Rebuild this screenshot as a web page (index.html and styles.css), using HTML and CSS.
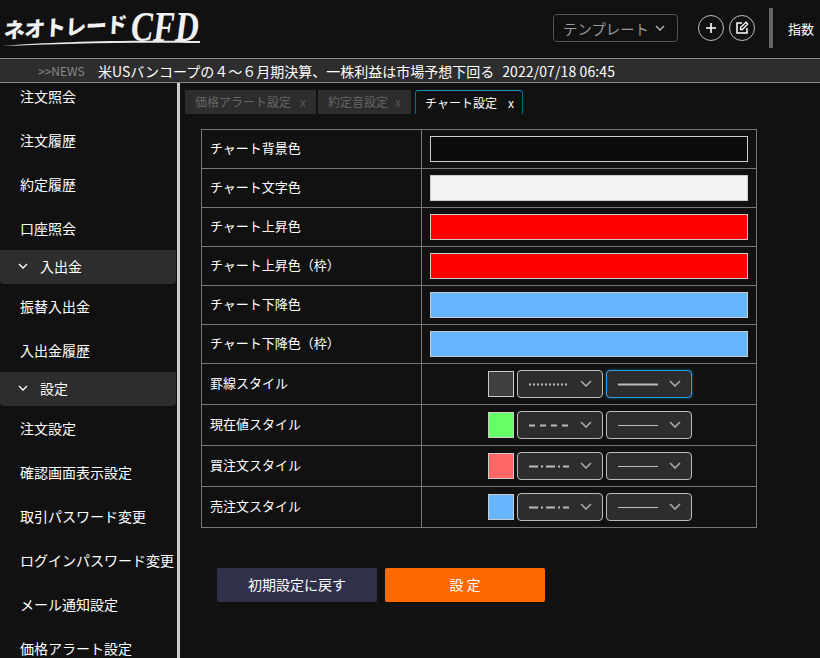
FILE: index.html
```html
<!DOCTYPE html>
<html lang="ja">
<head>
  <meta charset="UTF-8">
  <title>ネオトレードCFD</title>
  <link rel="stylesheet" href="styles.css">
</head>
<body>
  <!-- Header -->
  <header class="header">
    <div class="logo">
      <span class="logo-kana">ネオトレード</span><span class="logo-cfd">CFD</span>
      <svg class="logo-swoosh" width="200" height="10" viewBox="0 0 200 10"><path d="M1 9 C50 5 110 3 199 4 L199 6 C120 5 60 7 1 9 Z" fill="#e8e8e8"/></svg>
    </div>
    <div class="header-tools">
      <div class="template-btn">テンプレート
        <svg width="10" height="6" viewBox="0 0 10 6"><path d="M1 1l4 4 4-4" fill="none" stroke="#aaa" stroke-width="1.6"/></svg>
      </div>
      <div class="round-btn">
        <svg width="12" height="12" viewBox="0 0 12 12"><path d="M6 1v10M1 6h10" stroke="#fff" stroke-width="1.6"/></svg>
      </div>
      <div class="round-btn">
        <svg width="14" height="14" viewBox="0 0 14 14"><path d="M7 2H2v10h10V7" fill="none" stroke="#fff" stroke-width="1.5"/><path d="M5.5 8.5V6.6L11 1.2l1.8 1.8-5.4 5.5z" fill="none" stroke="#fff" stroke-width="1.3"/></svg>
      </div>
      <div class="header-sep"></div>
      <div class="header-index">指数</div>
    </div>
  </header>

  <!-- News -->
  <div class="news">
    <span class="news-label">&gt;&gt;NEWS</span>
    <span class="news-text">米USバンコープの４～６月期決算、一株利益は市場予想下回る</span>
    <span class="news-date">2022/07/18 06:45</span>
  </div>

  <div class="wrapper">
    <!-- Sidebar -->
    <nav class="sidebar">
      <div class="side-list">
        <a class="side-item">注文照会</a>
        <a class="side-item">注文履歴</a>
        <a class="side-item">約定履歴</a>
        <a class="side-item">口座照会</a>
        <div class="side-group">
          <svg width="10" height="6" viewBox="0 0 10 6"><path d="M1 1l4 4 4-4" fill="none" stroke="#fff" stroke-width="1.3"/></svg>
          入出金
        </div>
        <a class="side-item">振替入出金</a>
        <a class="side-item">入出金履歴</a>
        <div class="side-group">
          <svg width="10" height="6" viewBox="0 0 10 6"><path d="M1 1l4 4 4-4" fill="none" stroke="#fff" stroke-width="1.3"/></svg>
          設定
        </div>
        <a class="side-item">注文設定</a>
        <a class="side-item">確認画面表示設定</a>
        <a class="side-item">取引パスワード変更</a>
        <a class="side-item">ログインパスワード変更</a>
        <a class="side-item">メール通知設定</a>
        <a class="side-item">価格アラート設定</a>
      </div>
    </nav>

    <!-- Main -->
    <main class="main">
      <div class="tabs">
        <div class="tab tab-1">価格アラート設定<span class="tab-x">x</span></div>
        <div class="tab tab-2">約定音設定<span class="tab-x">x</span></div>
        <div class="tab tab-active">チャート設定<span class="tab-x">x</span></div>
      </div>

      <table class="settings">
        <tr class="color-row"><th>チャート背景色</th><td><div class="color-bar c-black"></div></td></tr>
        <tr class="color-row"><th>チャート文字色</th><td><div class="color-bar c-white"></div></td></tr>
        <tr class="color-row"><th>チャート上昇色</th><td><div class="color-bar c-red"></div></td></tr>
        <tr class="color-row"><th>チャート上昇色（枠）</th><td><div class="color-bar c-red"></div></td></tr>
        <tr class="color-row"><th>チャート下降色</th><td><div class="color-bar c-blue"></div></td></tr>
        <tr class="color-row"><th>チャート下降色（枠）</th><td><div class="color-bar c-blue"></div></td></tr>
        <tr class="style-row">
          <th>罫線スタイル</th>
          <td><div class="style-cell">
            <div class="swatch s-gray"></div>
            <div class="line-select"><svg width="40" height="3"><line x1="0" x2="40" y1="1.5" y2="1.5" stroke="#bbb" stroke-width="2" stroke-dasharray="2 2"/></svg><svg class="caret" width="12" height="7" viewBox="0 0 12 7"><path d="M1 1l5 5 5-5" fill="none" stroke="#aaa" stroke-width="1.6"/></svg></div>
            <div class="line-select focused"><svg width="40" height="3"><line x1="0" x2="40" y1="1.5" y2="1.5" stroke="#bbb" stroke-width="2"/></svg><svg class="caret" width="12" height="7" viewBox="0 0 12 7"><path d="M1 1l5 5 5-5" fill="none" stroke="#aaa" stroke-width="1.6"/></svg></div>
          </div></td>
        </tr>
        <tr class="style-row">
          <th>現在値スタイル</th>
          <td><div class="style-cell">
            <div class="swatch s-green"></div>
            <div class="line-select"><svg width="40" height="3"><line x1="0" x2="40" y1="1.5" y2="1.5" stroke="#bbb" stroke-width="2" stroke-dasharray="6 5"/></svg><svg class="caret" width="12" height="7" viewBox="0 0 12 7"><path d="M1 1l5 5 5-5" fill="none" stroke="#aaa" stroke-width="1.6"/></svg></div>
            <div class="line-select"><svg width="40" height="3"><line x1="0" x2="40" y1="1.5" y2="1.5" stroke="#bbb" stroke-width="1"/></svg><svg class="caret" width="12" height="7" viewBox="0 0 12 7"><path d="M1 1l5 5 5-5" fill="none" stroke="#aaa" stroke-width="1.6"/></svg></div>
          </div></td>
        </tr>
        <tr class="style-row">
          <th>買注文スタイル</th>
          <td><div class="style-cell">
            <div class="swatch s-red"></div>
            <div class="line-select"><svg width="40" height="3"><line x1="0" x2="40" y1="1.5" y2="1.5" stroke="#bbb" stroke-width="2" stroke-dasharray="9 3 2 3"/></svg><svg class="caret" width="12" height="7" viewBox="0 0 12 7"><path d="M1 1l5 5 5-5" fill="none" stroke="#aaa" stroke-width="1.6"/></svg></div>
            <div class="line-select"><svg width="40" height="3"><line x1="0" x2="40" y1="1.5" y2="1.5" stroke="#bbb" stroke-width="1"/></svg><svg class="caret" width="12" height="7" viewBox="0 0 12 7"><path d="M1 1l5 5 5-5" fill="none" stroke="#aaa" stroke-width="1.6"/></svg></div>
          </div></td>
        </tr>
        <tr class="style-row">
          <th>売注文スタイル</th>
          <td><div class="style-cell">
            <div class="swatch s-blue"></div>
            <div class="line-select"><svg width="40" height="3"><line x1="0" x2="40" y1="1.5" y2="1.5" stroke="#bbb" stroke-width="2" stroke-dasharray="9 3 2 3"/></svg><svg class="caret" width="12" height="7" viewBox="0 0 12 7"><path d="M1 1l5 5 5-5" fill="none" stroke="#aaa" stroke-width="1.6"/></svg></div>
            <div class="line-select"><svg width="40" height="3"><line x1="0" x2="40" y1="1.5" y2="1.5" stroke="#bbb" stroke-width="1"/></svg><svg class="caret" width="12" height="7" viewBox="0 0 12 7"><path d="M1 1l5 5 5-5" fill="none" stroke="#aaa" stroke-width="1.6"/></svg></div>
          </div></td>
        </tr>
      </table>

      <div class="actions">
        <button class="btn btn-reset">初期設定に戻す</button>
        <button class="btn btn-save">設 定</button>
      </div>
    </main>
  </div>
</body>
</html>
```

FILE: styles.css
```css
/* Global Styles */
* {
  margin: 0;
  padding: 0;
  box-sizing: border-box;
}

html, body {
  height: 658px;
  overflow: hidden;
}

body {
  font-family: "Noto Sans CJK JP", "Noto Sans", sans-serif;
  background-color: #111;
  color: #fff;
  font-size: 14px;
}

/* Header */
.header {
  height: 58px;
  display: flex;
  justify-content: space-between;
  align-items: center;
  overflow: hidden;
}

.logo {
  position: relative;
  display: flex;
  align-items: center;
  height: 58px;
  padding-left: 4px;
  color: #f2f2f2;
  white-space: nowrap;
}

.logo-kana {
  font-size: 21px;
  font-weight: 900;
  letter-spacing: -0.5px;
  transform: rotate(-3deg) skewX(-6deg);
  margin-bottom: 6px;
}

.logo-cfd {
  font-family: "Liberation Serif", serif;
  font-size: 33px;
  font-weight: bold;
  font-style: italic;
  transform: scaleY(1.25);
  margin-left: 4px;
  margin-bottom: 4px;
}

.logo-swoosh {
  position: absolute;
  left: 1px;
  top: 37px;
}

.header-tools {
  display: flex;
  align-items: center;
  padding-bottom: 2px;
}

.template-btn {
  width: 125px;
  height: 28px;
  margin-right: 20px;
  padding-right: 3px;
  display: flex;
  align-items: center;
  justify-content: center;
  gap: 6px;
  border: 1px solid #555;
  border-radius: 4px;
  color: #999;
  font-size: 14.4px;
}

.round-btn {
  width: 26px;
  height: 26px;
  margin-right: 5px;
  display: flex;
  align-items: center;
  justify-content: center;
  border: 1px solid #bbb;
  border-radius: 50%;
}

.header-sep {
  width: 4px;
  height: 40px;
  margin: 0 15px 0 9px;
  background-color: #666;
}

.header-index {
  width: 32px;
  font-size: 13px;
}

/* News */
.news {
  height: 25px;
  display: flex;
  align-items: center;
  padding-left: 38px;
  background-color: #2d2d2d;
  border-top: 1px solid #888;
  border-bottom: 1px solid #888;
  white-space: nowrap;
}

.news-label {
  width: 60px;
  color: #888;
  font-size: 12px;
}

.news-text {
  margin-right: 8px;
}

.news-date {
  letter-spacing: 0.1px;
}

/* Sidebar */
.wrapper {
  display: flex;
  height: 575px;
}

.sidebar {
  width: 180px;
  flex-shrink: 0;
  overflow: hidden;
  border-right: 3px solid #ccc;
}

.side-list {
  margin-top: -9px;
}

.side-item {
  display: flex;
  align-items: center;
  height: 44px;
  padding-left: 20px;
  white-space: nowrap;
}

.side-group {
  display: flex;
  align-items: center;
  gap: 12px;
  height: 34px;
  padding: 0 0 2px 18px;
  background-color: #2d2d2d;
  border-radius: 0 0 4px 4px;
  margin-right: 1px;
}

/* Tabs */
.main {
  flex: 1;
  padding: 7px 0 0 5px;
}

.tabs {
  display: flex;
  gap: 2px;
  height: 24px;
}

.tab {
  display: flex;
  align-items: center;
  justify-content: space-between;
  padding: 0 10px 1px;
  background-color: #2d2d2d;
  color: #666;
  font-size: 12px;
  white-space: nowrap;
}

.tab-1 {
  width: 131px;
}

.tab-2 {
  width: 93px;
  margin-right: 2px;
}

.tab-active {
  width: 108px;
  background-color: #111;
  color: #fff;
  border: 1px solid #0a6c94;
  border-top-color: #1a93c4;
  border-bottom: none;
  border-radius: 3px 3px 0 0;
  padding: 0 8px 1px 9px;
}

.tab-x {
  font-size: 12px;
  color: #555;
}

.tab-active .tab-x {
  color: #fff;
}

/* Settings Table */
.settings {
  width: 556px;
  margin: 15px 0 0 16px;
  border-collapse: collapse;
  table-layout: fixed;
}

.settings th, .settings td {
  border: 1px solid #777;
}

.settings th {
  width: 220px;
  padding: 0 0 3px 8px;
  text-align: left;
  font-size: 13px;
  font-weight: 400;
}

.color-row {
  height: 39px;
}

.style-row {
  height: 41px;
}

.color-row td {
  padding: 0 8px;
}

.color-bar {
  height: 26px;
  border: 1px solid #ccc;
}

.c-black { background-color: #0b0b0b; }
.c-white { background-color: #f2f2f2; }
.c-red { background-color: #ff0000; }
.c-blue { background-color: #66b5ff; }

.style-cell {
  display: flex;
  align-items: center;
  justify-content: center;
  gap: 3px;
  padding-left: 2px;
}

.swatch {
  width: 26px;
  height: 26px;
  border: 1px solid #ccc;
}

.s-gray { background-color: #3e3e3e; }
.s-green { background-color: #66ff66; }
.s-red { background-color: #ff6666; }
.s-blue { background-color: #66b5ff; }

.line-select {
  width: 86px;
  height: 28px;
  display: flex;
  align-items: center;
  justify-content: space-between;
  padding: 0 10px 0 11px;
  background-color: #2d2d2d;
  border: 1px solid #bbb;
  border-radius: 4px;
}

.line-select.focused {
  border-color: #2f9be8;
  box-shadow: 0 0 3px #0a6c94;
}

.caret {
  margin-bottom: 2px;
}

/* Buttons */
.actions {
  display: flex;
  gap: 8px;
  margin: 40px 0 0 32px;
}

.btn {
  width: 160px;
  height: 34px;
  padding-bottom: 2px;
  border: none;
  border-radius: 2px;
  color: #fff;
  font-family: inherit;
  font-size: 14px;
}

.btn-reset {
  background-color: #30304a;
}

.btn-save {
  background-color: #ff6a00;
}
```
